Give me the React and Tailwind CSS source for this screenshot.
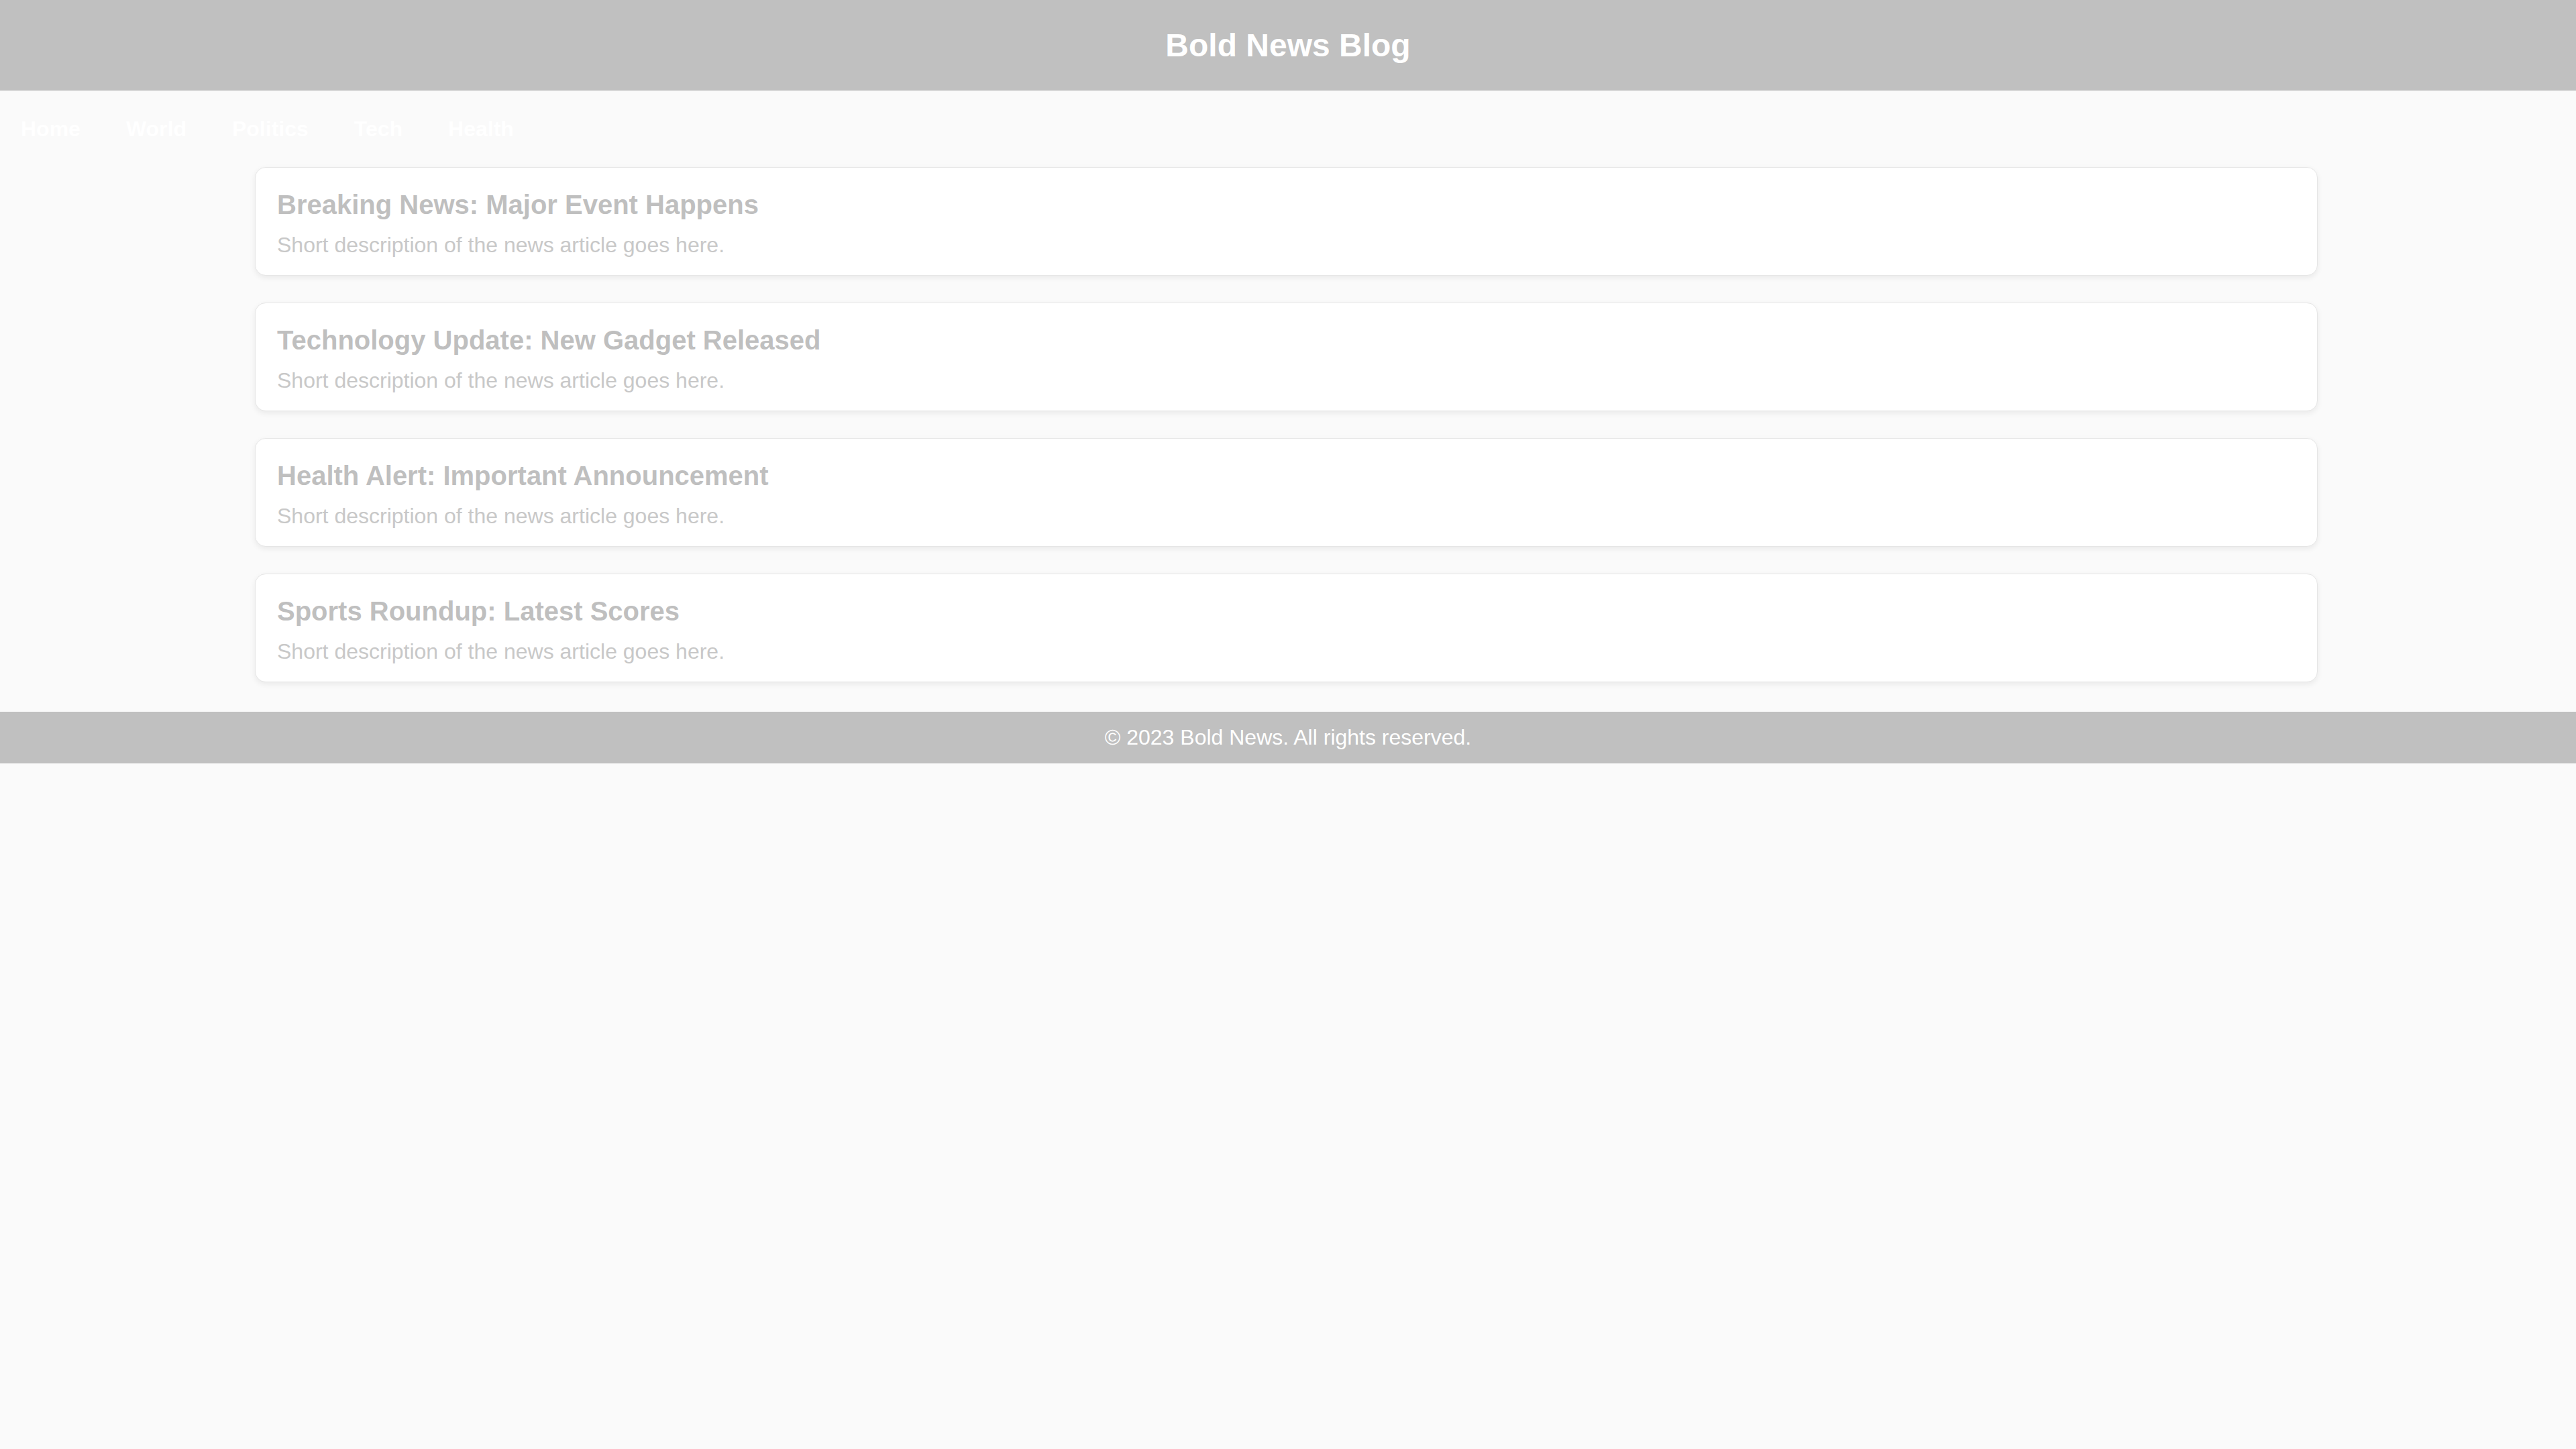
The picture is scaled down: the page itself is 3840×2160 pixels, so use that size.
import React from "react";

const articles = [
  "Breaking News: Major Event Happens",
  "Technology Update: New Gadget Released",
  "Health Alert: Important Announcement",
  "Sports Roundup: Latest Scores",
];

const links = ["Home", "World", "Politics", "Tech", "Health"];

export default function App() {
  return (
    <div className="min-h-screen bg-[#fafafa] font-['Liberation_Sans',Arial,sans-serif]">
      <header className="bg-[#c0c0c0] py-[40px] text-center">
        <h1 className="text-[48px] leading-[55px] font-bold text-white">Bold News Blog</h1>
      </header>

      <nav className="flex gap-[68px] pl-[31px] pt-[39px] pb-[38px]">
        {links.map((l) => (
          <a key={l} href="#" className="text-[32px] leading-[37px] font-bold text-white">
            {l}
          </a>
        ))}
      </nav>

      <main className="pl-[380px] pr-[385px] flex flex-col gap-[40px] pb-[44px]">
        {articles.map((title) => (
          <article
            key={title}
            className="bg-white border border-[#e6e6e6] rounded-2xl pt-8 px-8 pb-[28px] shadow-[0_3px_8px_rgba(0,0,0,0.07)]"
          >
            <h2 className="text-[40px] leading-[46px] font-bold text-[#bfbfbf]">{title}</h2>
            <p className="mt-[20px] text-[32px] leading-[34px] text-[#c8c8c8]">
              Short description of the news article goes here.
            </p>
          </article>
        ))}
      </main>

      <footer className="bg-[#c0c0c0] py-[20px] text-center">
        <p className="text-[32px] leading-[37px] text-white">© 2023 Bold News. All rights reserved.</p>
      </footer>
    </div>
  );
}
